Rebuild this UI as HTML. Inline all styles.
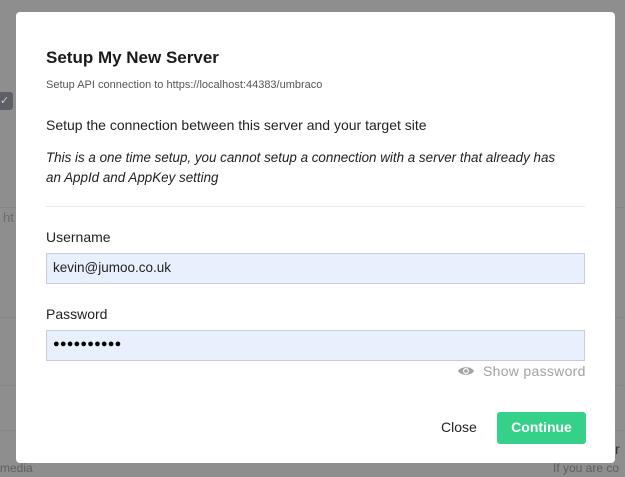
<!DOCTYPE html>
<html><head><style>
body{margin:0;width:625px;height:477px;background:#8e8e8e;position:relative;overflow:hidden;font-family:"Liberation Sans",sans-serif;}
.bgl{position:absolute;left:0;right:0;height:1px;background:#858585;}
.m{position:absolute;left:16px;top:12px;width:599px;height:451px;background:#fff;border-radius:4px;}
.a{position:absolute;white-space:nowrap;}
.inp{position:absolute;left:30px;width:537px;height:29px;background:#e8f0fe;border:1px solid #c9ced6;}
</style></head><body>
<div class="bgl" style="top:207px"></div>
<div class="bgl" style="top:317px"></div>
<div class="bgl" style="top:385px"></div>
<div class="bgl" style="top:430px"></div>
<div style="position:absolute;left:0;top:92px;width:13px;height:18px;background:#5e6068;border-radius:0 3px 3px 0;color:#ccc;font-size:11px;line-height:18px;">✓</div>
<div class="a" style="left:3px;top:210px;font-size:13px;color:#6a6a6a">ht</div>
<div class="a" style="left:0;top:461px;font-size:12px;color:#5f5f5f">media</div>
<div class="a" style="left:553px;top:461px;font-size:12px;color:#5f5f5f">If you are co</div>
<div class="a" style="left:615px;top:441px;font-size:14px;color:#333">r</div>
<div class="m">
<div class="a" style="left:30px;top:36px;font-size:17px;font-weight:bold;color:#1a1a1a">Setup My New Server</div>
<div class="a" style="left:30px;top:67px;font-size:11px;color:#555">Setup API connection to https://localhost:44383/umbraco</div>
<div class="a" style="left:30px;top:105px;font-size:14px;color:#222">Setup the connection between this server and your target site</div>
<div class="a" style="left:30px;top:136px;font-size:13.4px;font-style:italic;color:#222;line-height:20px">This is a one time setup, you cannot setup a connection with a server that already has<br>an AppId and AppKey setting</div>
<div style="position:absolute;left:30px;top:194px;width:539px;height:1px;background:#e9e9eb"></div>
<div class="a" style="left:30px;top:217px;font-size:14px;color:#222">Username</div>
<div class="inp" style="top:241px"><span style="position:absolute;left:6px;top:6px;font-size:13.5px;color:#222">kevin@jumoo.co.uk</span></div>
<div class="a" style="left:30px;top:294px;font-size:14px;color:#222">Password</div>
<div class="inp" style="top:318px"><span style="position:absolute;left:6px;top:7px;font-size:11px;color:#000;letter-spacing:0.2px">●●●●●●●●●●</span></div>
<svg style="position:absolute;left:441px;top:353px" width="18" height="12" viewBox="0 0 18 12"><path d="M1 6C4 1 14 1 17 6C14 11 4 11 1 6Z" fill="#a2a1a6"/><circle cx="9" cy="6" r="3" fill="#fff"/><circle cx="9" cy="6" r="1.8" fill="#a2a1a6"/></svg>
<div class="a" style="left:467px;top:351px;font-size:14px;color:#a2a1a6;letter-spacing:0.3px">Show password</div>
<div class="a" style="left:425px;top:407px;font-size:14px;color:#222">Close</div>
<div style="position:absolute;left:481px;top:400px;width:89px;height:32px;background:#35d08a;border-radius:3px;color:#fff;font-weight:bold;font-size:14px;text-align:center;line-height:31px">Continue</div>
</div>
</body></html>
